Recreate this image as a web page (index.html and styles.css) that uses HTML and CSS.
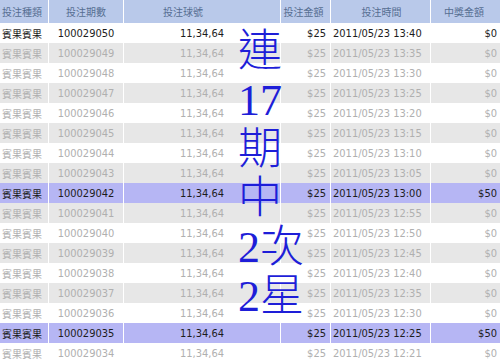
FILE: index.html
```html
<!DOCTYPE html>
<html lang="zh-Hant">
<head>
<meta charset="utf-8">
<title>投注紀錄</title>
<link rel="stylesheet" href="styles.css">
</head>
<body>
<div class="board">
  <div class="row head">
    <div class="c c1">投注種類</div>
    <div class="c c2">投注期數</div>
    <div class="c c3">投注球號</div>
    <div class="c c4">投注金額</div>
    <div class="c c5">投注時間</div>
    <div class="c c6">中獎金額</div>
  </div>
  <div class="row cur"><div class="c c1">賓果賓果</div><div class="c c2">100029050</div><div class="c c3">11,34,64</div><div class="c c4">$25</div><div class="c c5">2011/05/23 13:40</div><div class="c c6">$0</div></div>
  <div class="row alt"><div class="c c1">賓果賓果</div><div class="c c2">100029049</div><div class="c c3">11,34,64</div><div class="c c4">$25</div><div class="c c5">2011/05/23 13:35</div><div class="c c6">$0</div></div>
  <div class="row"><div class="c c1">賓果賓果</div><div class="c c2">100029048</div><div class="c c3">11,34,64</div><div class="c c4">$25</div><div class="c c5">2011/05/23 13:30</div><div class="c c6">$0</div></div>
  <div class="row alt"><div class="c c1">賓果賓果</div><div class="c c2">100029047</div><div class="c c3">11,34,64</div><div class="c c4">$25</div><div class="c c5">2011/05/23 13:25</div><div class="c c6">$0</div></div>
  <div class="row"><div class="c c1">賓果賓果</div><div class="c c2">100029046</div><div class="c c3">11,34,64</div><div class="c c4">$25</div><div class="c c5">2011/05/23 13:20</div><div class="c c6">$0</div></div>
  <div class="row alt"><div class="c c1">賓果賓果</div><div class="c c2">100029045</div><div class="c c3">11,34,64</div><div class="c c4">$25</div><div class="c c5">2011/05/23 13:15</div><div class="c c6">$0</div></div>
  <div class="row"><div class="c c1">賓果賓果</div><div class="c c2">100029044</div><div class="c c3">11,34,64</div><div class="c c4">$25</div><div class="c c5">2011/05/23 13:10</div><div class="c c6">$0</div></div>
  <div class="row alt"><div class="c c1">賓果賓果</div><div class="c c2">100029043</div><div class="c c3">11,34,64</div><div class="c c4">$25</div><div class="c c5">2011/05/23 13:05</div><div class="c c6">$0</div></div>
  <div class="row win"><div class="c c1">賓果賓果</div><div class="c c2">100029042</div><div class="c c3">11,34,64</div><div class="c c4">$25</div><div class="c c5">2011/05/23 13:00</div><div class="c c6">$50</div></div>
  <div class="row alt"><div class="c c1">賓果賓果</div><div class="c c2">100029041</div><div class="c c3">11,34,64</div><div class="c c4">$25</div><div class="c c5">2011/05/23 12:55</div><div class="c c6">$0</div></div>
  <div class="row"><div class="c c1">賓果賓果</div><div class="c c2">100029040</div><div class="c c3">11,34,64</div><div class="c c4">$25</div><div class="c c5">2011/05/23 12:50</div><div class="c c6">$0</div></div>
  <div class="row alt"><div class="c c1">賓果賓果</div><div class="c c2">100029039</div><div class="c c3">11,34,64</div><div class="c c4">$25</div><div class="c c5">2011/05/23 12:45</div><div class="c c6">$0</div></div>
  <div class="row"><div class="c c1">賓果賓果</div><div class="c c2">100029038</div><div class="c c3">11,34,64</div><div class="c c4">$25</div><div class="c c5">2011/05/23 12:40</div><div class="c c6">$0</div></div>
  <div class="row alt"><div class="c c1">賓果賓果</div><div class="c c2">100029037</div><div class="c c3">11,34,64</div><div class="c c4">$25</div><div class="c c5">2011/05/23 12:35</div><div class="c c6">$0</div></div>
  <div class="row"><div class="c c1">賓果賓果</div><div class="c c2">100029036</div><div class="c c3">11,34,64</div><div class="c c4">$25</div><div class="c c5">2011/05/23 12:30</div><div class="c c6">$0</div></div>
  <div class="row win"><div class="c c1">賓果賓果</div><div class="c c2">100029035</div><div class="c c3">11,34,64</div><div class="c c4">$25</div><div class="c c5">2011/05/23 12:25</div><div class="c c6">$50</div></div>
  <div class="row"><div class="c c1">賓果賓果</div><div class="c c2">100029034</div><div class="c c3">11,34,64</div><div class="c c4">$25</div><div class="c c5">2011/05/23 12:21</div><div class="c c6">$0</div></div>

  <div class="note">
    <div class="ln">連</div>
    <div class="ln">17</div>
    <div class="ln">期</div>
    <div class="ln">中</div>
    <div class="ln">2次</div>
    <div class="ln">2星</div>
  </div>
</div>
</body>
</html>
```

FILE: styles.css
```css
html, body {
  margin: 0;
  padding: 0;
  background: #ffffff;
  overflow: hidden;
}

.board {
  position: relative;
  width: 500px;
  font-family: "DejaVu Sans Condensed", "DejaVu Sans", "Noto Sans CJK TC", sans-serif;
  font-stretch: condensed;
  font-size: 11px;
  color: #b0b0b0;
}

.row {
  display: grid;
  grid-template-columns: 48px 74px 156px 49px 99px 69px;
  column-gap: 1px;
  height: 20px;
  background: #ffffff;
}

.c {
  display: flex;
  align-items: center;
  white-space: nowrap;
  overflow: hidden;
}

.row.alt .c { background: #e7e7e7; }
.row.win .c { background: #b6b6f4; color: #1c1c1c; }
.row.cur .c { color: #1c1c1c; }

.head { height: 23px; }
.head .c {
  background: #b9c9ea;
  color: #566e92;
  font-family: "Noto Sans CJK TC", sans-serif;
  font-size: 10px;
  justify-content: center;
}
.head .c1 { justify-content: flex-start; padding-left: 2px; }
.head .c3 { padding-right: 38px; }

.c1 {
  font-family: "Noto Sans CJK TC", sans-serif;
  font-size: 10px;
  padding-left: 2px;
}
.c2 { justify-content: center; }
.c3 { justify-content: flex-end; padding-right: 56px; }
.c4 { justify-content: flex-end; padding-right: 4px; }
.c5 { justify-content: flex-start; padding-left: 2px; }
.c6 { justify-content: flex-end; padding-right: 3px; }

.note {
  position: absolute;
  left: 238px;
  top: 27px;
  display: flex;
  flex-direction: column;
  font-family: "Liberation Serif", "Noto Sans CJK TC", serif;
  font-size: 44px;
  font-weight: 300;
  line-height: 49px;
  color: #1e1ed8;
}

.ln { height: 49px; white-space: nowrap; }
```
